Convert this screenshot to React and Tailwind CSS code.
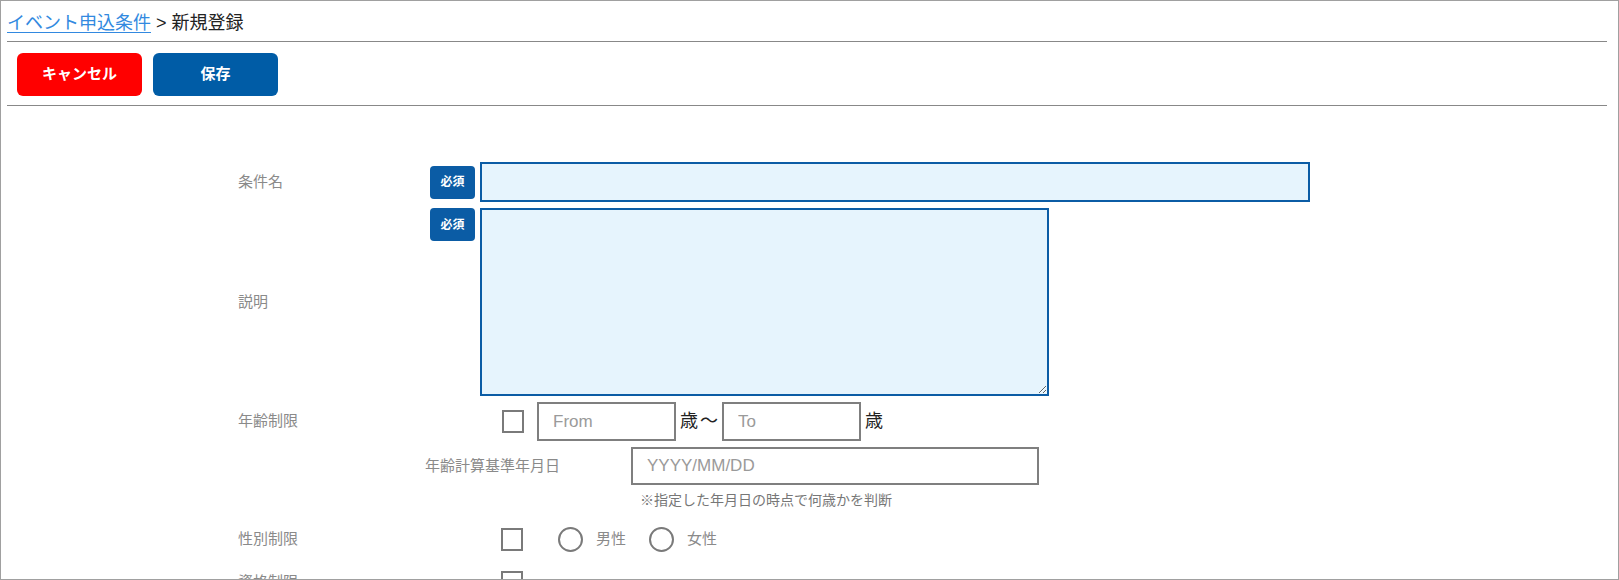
import { useState } from 'react'

const LABEL = 'text-[15px] text-[#8a8a8a]'

function Badge() {
  return (
    <div className="w-[45px] h-[33px] shrink-0 rounded-[4px] bg-[#0b5ca5] text-white
                    text-[12px] font-bold flex items-center justify-center">
      必須
    </div>
  )
}

function Check({ checked, onChange }) {
  return (
    <button
      type="button"
      onClick={onChange}
      className="w-[22px] h-[23px] shrink-0 border-2 border-[#7a7a7a] bg-white flex items-center justify-center"
    >
      {checked && <span className="text-[14px] leading-none text-[#333]">✓</span>}
    </button>
  )
}

function Radio({ label, selected, onSelect }) {
  return (
    <label className="flex items-center cursor-pointer" onClick={onSelect}>
      <span className="w-[25px] h-[25px] rounded-full border-2 border-[#7a7a7a] bg-white flex items-center justify-center">
        {selected && <span className="w-[11px] h-[11px] rounded-full bg-[#555]" />}
      </span>
      <span className={`ml-[13px] ${LABEL}`}>{label}</span>
    </label>
  )
}

export default function App() {
  const [age, setAge] = useState(false)
  const [gender, setGender] = useState(false)
  const [qual, setQual] = useState(false)
  const [sex, setSex] = useState(null)

  return (
    <div className="h-[580px] overflow-hidden border border-[#a0a0a0] bg-white
                    font-['Liberation_Sans','Noto_Sans_CJK_JP',sans-serif]">
      <div className="pl-[6px] pr-[11px]">

        {/* ── Breadcrumb ─────────────────────────────────────── */}
        <div className="h-[40px] pt-[4px] flex items-center text-[18px] text-[#222]">
          <a href="#" className="text-[#3289e0] underline underline-offset-[3px]">イベント申込条件</a>
          <span className="ml-[5px]">&gt; 新規登録</span>
        </div>
        <div className="border-t border-[#888]" />

        {/* ── Actions ────────────────────────────────────────── */}
        <div className="flex gap-[11px] pl-[10px] pt-[11px] pb-[9px]">
          <button className="w-[125px] h-[43px] rounded-[6px] bg-[#ff0000] text-white text-[15px] font-bold">
            キャンセル
          </button>
          <button className="w-[125px] h-[43px] rounded-[6px] bg-[#005ca6] text-white text-[15px] font-bold">
            保存
          </button>
        </div>
        <div className="border-t border-[#888]" />

        {/* ── Form ───────────────────────────────────────────── */}
        <div className="pl-[231px] pt-[56px]">

          <div className="flex items-center h-[40px]">
            <div className={`w-[192px] ${LABEL}`}>条件名</div>
            <Badge />
            <input
              className="ml-[5px] w-[830px] h-[40px] border-2 border-[#0b5ca5] bg-[#e6f4fd] outline-none px-2 text-[16px]"
            />
          </div>

          <div className="flex mt-[6px]">
            <div className={`w-[192px] self-center ${LABEL}`}>説明</div>
            <Badge />
            <textarea
              className="ml-[5px] w-[569px] h-[188px] border-2 border-[#0b5ca5] bg-[#e6f4fd] outline-none p-2 text-[16px] block"
            />
          </div>

          <div className="flex items-center mt-[6px] h-[39px]">
            <div className={`w-[192px] ${LABEL}`}>年齢制限</div>
            <div className="ml-[72px]"><Check checked={age} onChange={() => setAge(v => !v)} /></div>
            <input
              placeholder="From"
              className="ml-[13px] w-[139px] h-[39px] border-2 border-[#7f7f7f] pl-[14px] text-[17px]
                         placeholder:text-[#9a9a9a] outline-none"
            />
            <span className="ml-[4px] text-[18px] text-[#222]">歳</span>
            <span className="ml-[2px] mr-[4px] text-[18px] text-[#222]">〜</span>
            <input
              placeholder="To"
              className="w-[139px] h-[39px] border-2 border-[#7f7f7f] pl-[14px] text-[17px]
                         placeholder:text-[#9a9a9a] outline-none"
            />
            <span className="ml-[4px] text-[18px] text-[#222]">歳</span>
          </div>

          <div className="flex items-center mt-[6px] h-[38px] pl-[187px]">
            <div className={`w-[206px] ${LABEL}`}>年齢計算基準年月日</div>
            <input
              placeholder="YYYY/MM/DD"
              className="w-[408px] h-[38px] border-2 border-[#7f7f7f] pl-[14px] text-[17px]
                         placeholder:text-[#9a9a9a] outline-none"
            />
          </div>
          <div className="pl-[402px] mt-[5px] text-[14px] leading-[20px] text-[#777]">
            ※指定した年月日の時点で何歳かを判断
          </div>

          <div className="flex items-center mt-[16px] h-[26px]">
            <div className={`w-[192px] ${LABEL}`}>性別制限</div>
            <div className="ml-[71px]"><Check checked={gender} onChange={() => setGender(v => !v)} /></div>
            <div className="ml-[35px]">
              <Radio label="男性" selected={sex === 'm'} onSelect={() => setSex('m')} />
            </div>
            <div className="ml-[23px]">
              <Radio label="女性" selected={sex === 'f'} onSelect={() => setSex('f')} />
            </div>
          </div>

          <div className="flex items-center mt-[17px] h-[26px]">
            <div className={`w-[192px] ${LABEL}`}>資格制限</div>
            <div className="ml-[71px]"><Check checked={qual} onChange={() => setQual(v => !v)} /></div>
          </div>
        </div>
      </div>
    </div>
  )
}
